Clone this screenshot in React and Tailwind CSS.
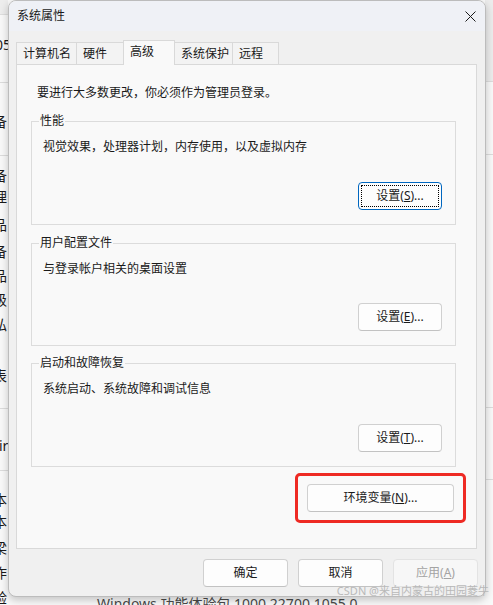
import React from 'react';

const Btn = ({ children, className = '', focused = false, disabled = false }) => (
  <button
    className={`flex items-center justify-center h-[28px] rounded-[4px] border text-[12px] leading-[16px] ${
      focused
        ? 'border-[#0067c0] bg-[#fdfdfd] text-[#1a1a1a]'
        : disabled
        ? 'border-[#e3e3e3] bg-[#f7f7f7] text-[#a3a3a3]'
        : 'border-[#d0d0d0] border-b-[#c2c2c2] bg-[#fdfdfd] text-[#1a1a1a]'
    } ${className}`}
  >
    {focused ? (
      <span className="flex items-center justify-center w-[78px] h-[22px] border border-dotted border-black">
        {children}
      </span>
    ) : (
      children
    )}
  </button>
);

const Group = ({ title, text, btn, className = '', focused = false }) => (
  <div className={`relative ml-[14px] w-[425px] flex flex-col border border-[#dcdcdc] ${className}`}>
    <span className="absolute -top-[9px] left-[7px] px-[1px] bg-[#f9f9f9] text-[12px] leading-[16px] text-[#1a1a1a]">
      {title}
    </span>
    <div className="pl-[11px] pt-[17px] text-[12px] leading-[16px] text-[#1a1a1a]">{text}</div>
    <div className="mt-auto self-end mr-[13px] mb-[14px]">
      <Btn focused={focused} className="w-[84px]">
        {btn}
      </Btn>
    </div>
  </div>
);

const tabs = [
  { name: '计算机名', w: 'w-[61px]' },
  { name: '硬件', w: 'w-[48px]' },
  { name: '高级', w: 'w-[52px]', active: true },
  { name: '系统保护', w: 'w-[59px]' },
  { name: '远程', w: 'w-[47px]' },
];

const App = () => {
  return (
    <div className="relative w-[493px] h-[605px] overflow-hidden flex bg-[#f9f9f9] font-['Noto_Sans','Noto_Sans_CJK_SC',sans-serif]">
      {/* window behind, left edge */}
      <div className="w-[8px] h-full overflow-hidden shrink-0 text-[14px] leading-[16px] text-[#1a1a1a] whitespace-nowrap">
        <div className="h-[15px] bg-[#ededed] border-b border-[#dedede]" />
        <div className="mt-[22px] -ml-[5px]">05</div>
        <div className="mt-[29px] h-px bg-[#dcdcdc]" />
        <div className="mt-[31px] -ml-[7px]">备</div>
        <div className="mt-[25px] h-px bg-[#dcdcdc]" />
        <div className="mt-[12px] -ml-[7px]">备</div>
        <div className="mt-[5px] -ml-[7px]">理</div>
        <div className="mt-[12px] -ml-[7px]">品</div>
        <div className="mt-[11px] -ml-[7px]">备</div>
        <div className="mt-[8px] -ml-[7px]">品</div>
        <div className="mt-[8px] -ml-[7px]">级</div>
        <div className="mt-[9px] -ml-[7px]">私</div>
        <div className="mt-[35px] -ml-[7px]">表</div>
        <div className="mt-[24px] h-px bg-[#dcdcdc]" />
        <div className="mt-[29px] -ml-[1px]">ir</div>
        <div className="mt-[16px] h-px bg-[#dcdcdc]" />
        <div className="mt-[21px] -ml-[7px]">本</div>
        <div className="mt-[6px] -ml-[7px]">本</div>
        <div className="mt-[10px] -ml-[7px]">梁</div>
        <div className="mt-[9px] -ml-[7px]">作</div>
        <div className="mt-[9px] -ml-[7px]">验</div>
      </div>

      {/* window behind, middle (only bottom row shows) */}
      <div className="flex-1 flex flex-col">
        <div className="flex-1" />
        <div className="h-[9px] pl-[89px] text-[14px] leading-[16px] text-[#4a4a4a] whitespace-nowrap">
          Windows 功能体验包 1000.22700.1055.0
        </div>
      </div>

      {/* window behind, right edge */}
      <div className="w-[8px] h-full shrink-0 flex flex-col">
        <div className="h-[82px] bg-[#ececec] border-b border-[#dcdcdc]" />
        <div className="h-[73px] border-b border-[#dcdcdc]" />
        <div className="h-[253px] border-b border-[#dcdcdc]" />
        <div className="h-[72px] border-b border-[#dcdcdc]" />
      </div>

      {/* dialog */}
      <div className="absolute left-[8px] top-0 w-[478px] h-[597px] flex flex-col rounded-[8px] overflow-hidden border border-[#bcbcbc] bg-[#f0f0f0] shadow-[0_3px_8px_rgba(0,0,0,0.22)]">
        <div className="h-[30px] shrink-0 flex items-center justify-between pl-[8px] pr-[9px] bg-[#eff1f6]">
          <span className="text-[12px] leading-[16px] text-[#1a1a1a]">系统属性</span>
          <svg width="11" height="11" viewBox="0 0 11 11">
            <path d="M0.5 0.5 L10.5 10.5 M10.5 0.5 L0.5 10.5" stroke="#1a1a1a" strokeWidth="1" fill="none" />
          </svg>
        </div>

        <div className="flex items-end pl-[7px] pt-[9px]">
          {tabs.map((t, i) => (
            <div
              key={t.name}
              className={`${t.w} flex items-center pl-[6px] border border-b-0 border-[#d9d9d9] text-[12px] leading-[16px] text-[#1a1a1a] ${
                i > 0 ? '-ml-px' : ''
              } ${t.active ? 'relative z-10 h-[25px] -mb-px bg-[#f9f9f9] pb-[2px]' : 'h-[22px] bg-[#f3f3f3]'}`}
            >
              {t.name}
            </div>
          ))}
        </div>

        <div className="ml-[7px] w-[461px] h-[485px] flex flex-col border border-[#d9d9d9] bg-[#f9f9f9]">
          <div className="ml-[20px] mt-[20px] text-[12px] leading-[16px] text-[#1a1a1a]">
            要进行大多数更改，你必须作为管理员登录。
          </div>

          <Group
            className="mt-[20px] h-[104px]"
            title="性能"
            text="视觉效果，处理器计划，内存使用，以及虚拟内存"
            focused
            btn={
              <>
                设置(<span className="underline">S</span>)...
              </>
            }
          />
          <Group
            className="mt-[18px] h-[103px]"
            title="用户配置文件"
            text="与登录帐户相关的桌面设置"
            btn={
              <>
                设置(<span className="underline">E</span>)...
              </>
            }
          />
          <Group
            className="mt-[17px] h-[104px]"
            title="启动和故障恢复"
            text="系统启动、系统故障和调试信息"
            btn={
              <>
                设置(<span className="underline">T</span>)...
              </>
            }
          />

          <div className="self-end mt-[6px] mr-[10px] w-[171px] h-[50px] flex items-center justify-center rounded-[5px] border-[3px] border-[#ee2a24]">
            <Btn className="w-[147px]">
              环境变量(<span className="underline">N</span>)...
            </Btn>
          </div>
        </div>

        <div className="mt-[10px] flex justify-end gap-[10px] pr-[7px]">
          <Btn className="w-[85px]">确定</Btn>
          <Btn className="w-[85px]">取消</Btn>
          <Btn className="w-[85px]" disabled>
            应用(<span className="underline">A</span>)
          </Btn>
        </div>
      </div>

      {/* watermark */}
      <div className="absolute right-[4px] top-[584px] text-[11px] leading-[14px] text-[#b4b4b4] opacity-90 whitespace-nowrap">
        CSDN @来自内蒙古的田园菱牛
      </div>
    </div>
  );
};

export default App;
